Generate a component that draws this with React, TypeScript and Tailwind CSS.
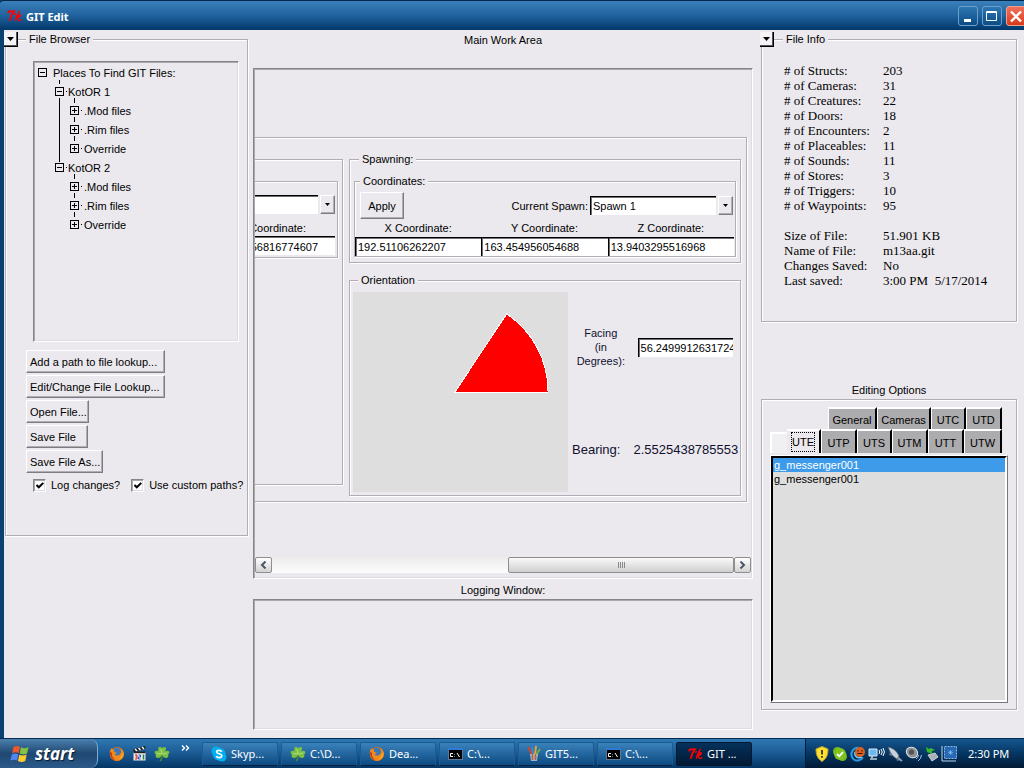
import React, { useState } from "react";
import type { ReactNode } from "react";

const groove = "border border-[#b0aeb4] shadow-[1px_1px_0_#fff,inset_1px_1px_0_#fff]";
const sunken =
  "border border-t-[#858489] border-l-[#858489] border-r-white border-b-white shadow-[inset_1px_1px_0_#a9a8ad,inset_-1px_-1px_0_#dcdde2]";
const entry =
  "bg-white border-t border-l border-t-black border-l-black shadow-[inset_1px_1px_0_#6f6e73] rounded-none outline-none text-[11px] text-black";
const raised =
  "border border-t-white border-l-white border-r-[#7d7c82] border-b-[#7d7c82] shadow-[inset_-1px_-1px_0_#b0aeb4] bg-[#ebe9ed]";

function TkLogo() {
  return (
    <svg width="15" height="12" viewBox="0 0 15 12" fill="none" stroke="#f00" aria-hidden="true">
      <path d="M.8 3.2 2 1.4 7 1.2 4.6 5 2.6 10.8" strokeWidth="1.9" />
      <path d="M12.6.8 10.8 4 8.2 10.8M8.6 7.6c2-2.8 4.400-3.200 4.800-2.400S11.500 7.400 9.600 7.600c1.400.4 1.200 2.800 2.400 3 .8.1 1.500-.7 2-1.500M6.800 4.300 9 3.500" strokeWidth="1.4" />
    </svg>
  );
}

function CollapseButton({ label }: { label: string }) {
  return (
    <button
      type="button"
      aria-label={label}
      className="absolute -left-px top-0 z-10 flex h-[15px] w-[14px] items-center justify-center border-r border-b border-black bg-[#f4f3f6] shadow-[inset_-1px_-1px_0_#55545a]"
    >
      <svg width="7" height="4" viewBox="0 0 7 4" aria-hidden="true">
        <path d="M0 0h7L3.500 4z" fill="#000" />
      </svg>
    </button>
  );
}

function Group({ title, className, children }: { title: string; className: string; children: ReactNode }) {
  return (
    <fieldset className={`min-w-0 ${groove} ${className}`}>
      <legend className="ml-[5px] bg-[#ebe9ed] px-[3px] leading-4">{title}</legend>
      {children}
    </fieldset>
  );
}

function ExpandBox({ open }: { open: boolean }) {
  return (
    <svg width="9" height="9" viewBox="0 0 9 9" fill="none" stroke="#000" shapeRendering="crispEdges" aria-hidden="true">
      <path d="M.5.5h8v8h-8zM2 4.500h5" />
      {!open && <path d="M4.500 2v5" />}
    </svg>
  );
}

function TreeLeaf({ name }: { name: string }) {
  return (
    <li className="relative flex h-[19px] items-center">
      <span className="absolute -top-[3px] left-1 h-[5px] w-px bg-black" />
      <ExpandBox open={false} />
      <span className="ml-[2px] w-px h-px bg-black" />
      <span className="ml-[2px]">{name}</span>
    </li>
  );
}

function TreeBranch({ name, last }: { name: string; last?: boolean }) {
  return (
    <li className="relative">
      {!last && <span className="absolute top-4 left-1 h-[64px] w-px bg-black" />}
      <div className="relative flex h-[19px] items-center">
        {!last && <span className="absolute -top-[2px] left-1 h-[4px] w-px bg-black" />}
        <ExpandBox open />
        <span className="ml-[2px] w-px h-px bg-black" />
        <span className="ml-px">{name}</span>
      </div>
      <ul className="pl-[15px]">
        <TreeLeaf name=".Mod files" />
        <TreeLeaf name=".Rim files" />
        <TreeLeaf name="Override" />
      </ul>
    </li>
  );
}

function Check({ label }: { label: string }) {
  const [on, setOn] = useState(true);
  return (
    <label className="relative flex items-center gap-[5px] whitespace-nowrap">
      <input
        type="checkbox"
        checked={on}
        onChange={() => setOn(!on)}
        className={`size-[13px] appearance-none bg-white ${sunken}`}
      />
      {on && (
        <svg className="pointer-events-none absolute left-[3px] top-[5px]" width="8" height="7" viewBox="0 0 8 7" aria-hidden="true">
          <path d="M.5 3 2.800 5.300 7.300.9" fill="none" stroke="#000" strokeWidth="2" />
        </svg>
      )}
      {label}
    </label>
  );
}

function FileBrowser() {
  const actions: [string, string][] = [
    ["Add a path to file lookup...", "w-[139px]"],
    ["Edit/Change File Lookup...", "w-[139px]"],
    ["Open File...", "w-[63px]"],
    ["Save File", "w-[62px]"],
    ["Save File As...", "w-[77px]"],
  ];
  return (
    <aside className="relative w-[243px] shrink-0">
      <CollapseButton label="Collapse file browser" />
      <fieldset className={`-mt-px h-[505px] min-w-0 ${groove}`}>
        <legend className="ml-[20px] bg-[#ebe9ed] px-[3px] leading-4">File Browser</legend>
        <div className={`mt-[14px] ml-[27px] mr-[8px] h-[281px] ${sunken} pt-px pl-[4px]`}>
          <div className="flex h-[19px] items-center gap-[6px]">
            <ExpandBox open />
            Places To Find GIT Files:
          </div>
          <ul className="pl-[17px]">
            <TreeBranch name="KotOR 1" />
            <TreeBranch name="KotOR 2" last />
          </ul>
        </div>
        <div className="mt-[8px] ml-[20px] flex flex-col items-start gap-[2px]">
          {actions.map(([name, width]) => (
            <button key={name} type="button" className={`h-[23px] ${width} ${raised} pt-px pl-[3px] text-left whitespace-nowrap`}>
              {name}
            </button>
          ))}
        </div>
        <div className="mt-[4px] ml-[27px] flex gap-[11px]">
          <Check label="Log changes?" />
          <Check label="Use custom paths?" />
        </div>
      </fieldset>
    </aside>
  );
}

function ArrowBox() {
  return (
    <span className={`flex h-[19px] w-[15px] shrink-0 items-center justify-center ${raised}`}>
      <svg width="5" height="3" viewBox="0 0 5 3" aria-hidden="true">
        <path d="M0 0h5L2.500 3z" fill="#000" />
      </svg>
    </span>
  );
}

function CoordinateField({ axis, value }: { axis: string; value: string }) {
  return (
    <label className="flex min-w-0 flex-1 flex-col">
      <span className="h-[18px] pt-px text-center leading-4">{axis} Coordinate:</span>
      <input defaultValue={value} className={`h-[19px] w-full min-w-0 pl-[2px] ${entry}`} />
    </label>
  );
}

function Spawning() {
  return (
    <Group title="Spawning:" className="px-[4px] pb-[5px]">
      <Group title="Coordinates:" className="mt-[6px]">
        <div className="flex h-[30px] items-center pt-[3px] pr-[2px] pl-[5px]">
          <button type="button" className={`h-[27px] w-[44px] ${raised}`}>
            Apply
          </button>
          <label htmlFor="spawn" className="ml-auto pr-[2px]">
            Current Spawn:
          </label>
          <div className="relative flex w-[143px]">
            <select id="spawn" className={`h-[19px] w-full appearance-none pl-[2px] ${entry}`}>
              <option>Spawn 1</option>
            </select>
            <span className="pointer-events-none absolute right-0 top-0 bg-[#ebe9ed] pl-[2px]">
              <ArrowBox />
            </span>
          </div>
        </div>
        <div className="flex pr-px">
          <CoordinateField axis="X" value="192.51106262207" />
          <CoordinateField axis="Y" value="163.454956054688" />
          <CoordinateField axis="Z" value="13.9403295516968" />
        </div>
      </Group>
    </Group>
  );
}

function Orientation() {
  return (
    <Group title="Orientation" className="mt-[9px] pr-[7px] pb-[3px] pl-[3px]">
      <div className="mt-[4px] flex">
        <svg className="shrink-0 bg-[#dedede]" width="215" height="200" viewBox="0 0 215 200" role="img" aria-label="Facing">
          <path d="M102 100H195A93 93 0 0 0 153.700 22z" fill="#f00" stroke="#fff" strokeWidth="1" shapeRendering="crispEdges" />
        </svg>
        <div className="flex min-w-0 flex-1 flex-col">
          <div className="mt-[34px] flex items-center">
            <label htmlFor="facing" className="w-[66px] text-center leading-[14px] text-[#101030]">
              Facing
              <br />
              (in
              <br />
              Degrees):
            </label>
            <input id="facing" defaultValue="56.2499912631724" className={`ml-[4px] h-[19px] w-[96px] min-w-0 pl-[2px] ${entry}`} />
          </div>
          <div className="mt-[74px] flex gap-[13px] pl-[4px] text-[13px] leading-4 whitespace-nowrap text-[#101030]">
            <span>Bearing:</span>
            <output>2.5525438785553</output>
          </div>
        </div>
      </div>
    </Group>
  );
}

function PreviousGroup() {
  return (
    <div className="mt-[21px] mr-[6px] h-[326px] min-w-0 flex-1 overflow-hidden border-y border-r border-[#b0aeb4] pr-[4px] shadow-[1px_1px_0_#fff,inset_0_1px_0_#fff]">
      <div className="mt-[21px] h-[77px] overflow-hidden border-y border-r border-[#b0aeb4] pt-[13px] pr-[2px] shadow-[1px_1px_0_#fff,inset_0_1px_0_#fff]">
        <div className="flex gap-[2px]">
          <input
            aria-label="Current selection"
            className="h-[19px] min-w-0 flex-1 rounded-none border-t border-black bg-white shadow-[inset_0_1px_0_#6f6e73]"
          />
          <ArrowBox />
        </div>
        <div className="flex h-[22px] items-center justify-end overflow-hidden pt-[5px] pr-[29px] whitespace-nowrap">Coordinate:</div>
        <div className="flex h-[19px] items-center justify-end overflow-hidden border-t border-black bg-white pt-px pr-[17px] shadow-[inset_0_1px_0_#6f6e73]">
          56816774607
        </div>
      </div>
    </div>
  );
}

function ScrollButton({ left }: { left?: boolean }) {
  return (
    <button
      type="button"
      aria-label={left ? "Scroll left" : "Scroll right"}
      className="flex w-[17px] shrink-0 items-center justify-center rounded-[2px] border border-[#8e8e8e] bg-linear-to-b from-white to-[#d2d2d2]"
    >
      <svg width="7" height="8" viewBox="0 0 7 8" fill="none" stroke="#4a5568" strokeWidth="2" aria-hidden="true">
        <path d={left ? "M5.500.5 2 4l3.500 3.500" : "M1.500.5 5 4 1.500 7.500"} />
      </svg>
    </button>
  );
}

function WorkArea() {
  return (
    <main className="flex min-w-0 flex-1 flex-col">
      <h2 className="text-center leading-4">Main Work Area</h2>
      <div className={`mt-[20px] flex h-[511px] flex-col overflow-hidden p-px ${sunken}`}>
        <div className="mt-[67px] mr-[4px] flex h-[365px] border-y border-r border-[#b0aeb4] pr-[5px] shadow-[1px_1px_0_#fff,inset_0_1px_0_#fff]">
          <PreviousGroup />
          <div className="w-[392px] shrink-0 pt-[13px]">
            <Spawning />
            <Orientation />
          </div>
        </div>
        <div className="mt-auto mb-[4px] flex h-[16px] bg-linear-to-b from-[#ececec] to-[#fdfdfd]">
          <ScrollButton left />
          <div className="flex-1" />
          <div className="flex w-[226px] items-center justify-center gap-px rounded-[2px] border border-[#8e8e8e] bg-linear-to-b from-[#fafafa] to-[#cfcfcf]">
            {[0, 1, 2, 3].map((n) => (
              <span key={n} className="h-[6px] w-px bg-[#8a8a8a]" />
            ))}
          </div>
          <ScrollButton />
        </div>
      </div>
      <h2 className="mt-[3px] text-center leading-4">Logging Window:</h2>
      <div className={`mt-px min-h-[131px] flex-1 ${sunken}`} />
    </main>
  );
}

const stats: [string, string][] = [
  ["# of Structs:", "203"],
  ["# of Cameras:", "31"],
  ["# of Creatures:", "22"],
  ["# of Doors:", "18"],
  ["# of Encounters:", "2"],
  ["# of Placeables:", "11"],
  ["# of Sounds:", "11"],
  ["# of Stores:", "3"],
  ["# of Triggers:", "10"],
  ["# of Waypoints:", "95"],
  ["", ""],
  ["Size of File:", "51.901 KB"],
  ["Name of File:", "m13aa.git"],
  ["Changes Saved:", "No"],
  ["Last saved:", "3:00 PM  5/17/2014"],
];

function Tab({ name, width }: { name: string; width: string }) {
  return (
    <button
      type="button"
      className={`${width} border-t-2 border-l border-r-2 border-t-white border-l-white border-r-black bg-[#acabad] pt-px`}
    >
      {name}
    </button>
  );
}

function RightColumn() {
  const [selected, setSelected] = useState(0);
  return (
    <aside className="relative w-[256px] shrink-0">
      <CollapseButton label="Collapse file info" />
      <fieldset className={`-mt-px h-[291px] min-w-0 ${groove}`}>
        <legend className="ml-[21px] bg-[#ebe9ed] px-[3px] leading-4">File Info</legend>
        <table className="mt-[16px] ml-[22px] font-['Liberation_Serif',serif] text-[13px] leading-[15px]">
          <tbody>
            {stats.map(([name, value], i) => (
              <tr key={i} className="h-[15px]">
                <td className="w-[99px] p-0">{name}</td>
                <td className="p-0 whitespace-pre">{value}</td>
              </tr>
            ))}
          </tbody>
        </table>
      </fieldset>
      <h2 className="mt-[60px] text-center leading-4">Editing Options</h2>
      <section className={`mt-px h-[311px] px-[8px] pt-[7px] ${groove}`}>
        <div className="flex h-[22px] justify-end pr-[6px]">
          <Tab name="General" width="w-[49px]" />
          <Tab name="Cameras" width="w-[54px]" />
          <Tab name="UTC" width="w-[35px]" />
          <Tab name="UTD" width="w-[36px]" />
        </div>
        <div className="flex h-[24px] justify-end pr-[6px]">
          <span className="mt-[3px] flex-1 border-t-2 border-l-2 border-white bg-[#f0eff2]" />
          <button type="button" className="w-[34px] border-t-2 border-r-2 border-t-white border-r-black bg-[#ebe9ed] px-[4px]">
            <span className="block border border-dotted border-black leading-[18px]">UTE</span>
          </button>
          <Tab name="UTP" width="w-[36px]" />
          <Tab name="UTS" width="w-[35px]" />
          <Tab name="UTM" width="w-[36px]" />
          <Tab name="UTT" width="w-[36px]" />
          <Tab name="UTW" width="w-[38px]" />
        </div>
        <div className="mt-[2px] h-[248px] border border-t-white border-l-white border-r-[#77767c] border-b-[#77767c]">
          <ul
            role="listbox"
            aria-label="Encounters"
            className="h-full border-2 border-t-black border-l-black border-r-white border-b-white bg-[#dedede]"
          >
            {["g_messenger001", "g_messenger001"].map((name, i) => (
              <li
                key={i}
                role="option"
                aria-selected={selected === i}
                onClick={() => setSelected(i)}
                className={`h-[14px] pl-px leading-[14px] ${selected === i ? "bg-[#3d9bea] text-white" : ""}`}
              >
                {name}
              </li>
            ))}
          </ul>
        </div>
      </section>
    </aside>
  );
}

function TitleBar() {
  const box = "flex h-[20px] w-[20px] items-center justify-center rounded-[3px] border border-[#6aa0cc] bg-linear-to-b from-[#2d77b2] to-[#0a4c85]";
  return (
    <header className="flex h-[30px] items-center overflow-hidden rounded-tl-[4px] border-t border-[#04284d] bg-linear-to-b from-[#3b80ba] from-0% via-[#2164a0] via-48% to-[#02386b] to-100% pl-[7px]">
      <TkLogo />
      <h1 className="ml-[4px] pt-[2px] font-['Noto_Sans',sans-serif] text-[11px] font-bold text-white">GIT Edit</h1>
      <div className="-mr-[2px] ml-auto flex gap-[3px]">
        <button type="button" aria-label="Minimize" className={box}>
          <svg width="18" height="18" viewBox="0 0 18 18" aria-hidden="true">
            <path d="M5 12h7v3H5z" fill="#fff" />
          </svg>
        </button>
        <button type="button" aria-label="Maximize" className={`ml-px ${box}`}>
          <svg width="18" height="18" viewBox="0 0 18 18" fill="none" stroke="#fff" aria-hidden="true">
            <path d="M3.500 4.500h10v9h-10zM3 5.500h11" />
          </svg>
        </button>
        <button
          type="button"
          aria-label="Close"
          className="ml-px flex h-[20px] w-[20px] items-center justify-center rounded-[3px] border border-[#f0a090] bg-linear-to-b from-[#f0705a] to-[#d83a18]"
        >
          <svg width="18" height="18" viewBox="0 0 18 18" fill="none" stroke="#fff" strokeWidth="2.400" aria-hidden="true">
            <path d="M4 4.500l10 10M14 4.500l-10 10" />
          </svg>
        </button>
      </div>
    </header>
  );
}

function Firefox() {
  return (
    <svg width="16" height="16" viewBox="0 0 16 16" aria-hidden="true">
      <circle cx="8" cy="8" r="7" fill="#e8700f" />
      <circle cx="7.500" cy="6.500" r="4.800" fill="#3b78b8" />
      <path d="M1 5c.5-1.500 1-2 1.500-3 .6 1 1.500 1.500 3 1.500-.5 1-1 1.500-.2 2.300 1 .8 2 .6 2.500.9C7 8 6 8 5.500 8.200c1 2 4.500 1.800 6-.7 1-1.700.6-4-.5-5.500 3 1.500 4.500 5 3.400 8.200C13 14 9 15.500 6 14.600 2 13.500.2 9 1 5z" fill="#f08a1c" />
      <path d="M1 6c-.3 4 2 8 6 8.800-3-2-4.500-4.500-4-8z" fill="#c93a12" />
      <path d="M14.200 6c.5 3-1.500 6.500-4.700 7.500 2.500-2 4-4 4.700-7.500z" fill="#fbcf3c" />
    </svg>
  );
}

function Clover() {
  return (
    <svg width="16" height="16" viewBox="0 0 16 16" aria-hidden="true">
      <path d="M8 8c.3 3 .2 5-2 7" stroke="#4d8a2a" strokeWidth="1.600" fill="none" />
      <g fill="#7cc242">
        <path d="M8 8C3.500 7.500 4 4.500 4.500 1.500 6 0 7.500 1 8 2.500 9.500.5 11 .5 12 2 12 5 11 7 8 8z" />
        <path d="M8 8C5 5 2.500 4 .8 5.500.5 7 1 8 2 8.500 1 10 2 11.500 3.500 12 6 12 7.500 10.500 8 8z" />
        <path d="M8 8c3-3 5.500-4 7.200-2.500.3 1.500-.2 2.500-1.200 3 1 1.500 0 3-1.500 3.500C10 12 8.500 10.500 8 8z" />
      </g>
      <path d="M8 8 7 3M8 8 3 7.500M8 8l5-1" stroke="#c3e79a" strokeWidth=".7" />
    </svg>
  );
}

function Clapper() {
  return (
    <svg width="15" height="15" viewBox="0 0 15 15" aria-hidden="true">
      <path d="M1 3.500 13 0l.8 2.500L2 6z" fill="#222" />
      <path d="M3 2.900 5 4.900M6.500 2l2 2M10 1l2 2" stroke="#fff" strokeWidth="1.400" />
      <path d="M1.500 6h12v8.500h-12z" fill="#e8e8e8" />
      <path d="M1.500 5.500h12v1.700h-12z" fill="#222" />
      <path d="M3 9h2v2H3.500M5 11v2H3" stroke="#d22" fill="none" />
      <path d="M6.500 9h2v2h-2v2h2" stroke="#25c" fill="none" />
      <path d="M11.500 8.500v5" stroke="#283" strokeWidth="1.500" />
    </svg>
  );
}

function Skype() {
  return (
    <svg width="16" height="16" viewBox="0 0 16 16" aria-hidden="true">
      <circle cx="5" cy="5" r="4.500" fill="#00aff0" />
      <circle cx="11" cy="11" r="4.500" fill="#00aff0" />
      <circle cx="8" cy="8" r="6.500" fill="#00aff0" />
      <path d="M10.700 5.700C10 4 5.700 3.700 5.600 6c0 2.300 5.200 1.300 5.200 3.800C10.700 12.300 6 12.200 5.300 10" fill="none" stroke="#fff" strokeWidth="1.700" />
    </svg>
  );
}

function Console() {
  return (
    <svg width="15" height="12" viewBox="0 0 15 12" aria-hidden="true">
      <path d="M0 0h15v12H0z" fill="#5d7896" />
      <path d="M0 0h15v2H0z" fill="#2f7ad4" />
      <path d="M1 2h13v9H1z" fill="#000" />
      <path d="M5 5.500H2.500v3H5M6.500 6v.5M6.500 8v.5M9 5l2.500 4" stroke="#fff" fill="none" />
    </svg>
  );
}

function Brushes() {
  return (
    <svg width="14" height="16" viewBox="0 0 14 16" fill="none" aria-hidden="true">
      <path d="M1.500 1 5 9" stroke="#d9442a" strokeWidth="2" />
      <path d="M5 1.500 6.500 9" stroke="#3d8bd0" strokeWidth="2" />
      <path d="M9 0 8 9" stroke="#e0a43a" strokeWidth="2" />
      <path d="M13 3 9 9" stroke="#6fb040" strokeWidth="2" />
      <path d="M3 8h8l-1 7H4z" fill="#d7dbe0" opacity=".7" />
      <path d="M5.500 8v6M8.500 8v6" stroke="#b8603a" strokeWidth="1.500" />
    </svg>
  );
}

function WindowsFlag() {
  return (
    <svg width="20" height="18" viewBox="0 0 20 18" aria-hidden="true">
      <path d="M3.500 2C6 .5 8 1 10 2L8.600 8.300C6.500 7 4.500 7 2 8.300z" fill="#f0562b" />
      <path d="M11 2.300c2.500 1.200 4.500 1.200 7.500-.3L17 8.400c-2.500 1.300-5 1.300-7.400.2z" fill="#82c341" />
      <path d="M1.800 9.400c2.500-1.300 4.500-1.100 6.600 0L7 15.600c-2-1.200-4-1.200-6.700 0z" fill="#4f86f0" />
      <path d="M9.300 9.800c2.400 1.100 4.900 1.100 7.400-.2l-1.400 6.400c-2.500 1.300-5 1.200-7.400 0z" fill="#fccb2f" />
    </svg>
  );
}

function TrayIcons() {
  return (
    <>
      <svg width="16" height="16" viewBox="0 0 16 16" aria-hidden="true">
        <path d="M8 .5 14 3c0 6-1.500 9.500-6 12.500C3.500 12.500 2 9 2 3z" fill="#ffe02a" stroke="#b8a040" />
        <path d="M8 4v4.500M8 10v1.800" stroke="#333" strokeWidth="1.800" />
      </svg>
      <svg width="16" height="16" viewBox="0 0 16 16" aria-hidden="true">
        <circle cx="5.500" cy="5.500" r="4.500" fill="#74b81b" />
        <circle cx="10.500" cy="10.500" r="4.500" fill="#74b81b" />
        <circle cx="8" cy="8" r="6" fill="#7fc41f" />
        <path d="M5 8l2.300 2.300L11 6" stroke="#fff" strokeWidth="1.800" fill="none" />
      </svg>
      <svg width="16" height="16" viewBox="0 0 16 16" aria-hidden="true">
        <path d="M8 1.500C3 2 1 6 1.500 9.500 2 13 5 15 8.500 14.500 11 14 12 13 13 11.500" fill="none" stroke="#2b9be6" strokeWidth="2" />
        <path d="M5 6c-1 5 3 6.500 7 5" fill="none" stroke="#7cc8f5" strokeWidth="1.600" />
        <circle cx="10" cy="6" r="5" fill="#d9601f" />
        <path d="M8 4v1.500M12 4v1.500M7.500 7.500h5" stroke="#3a1200" />
      </svg>
      <svg width="17" height="16" viewBox="0 0 17 16" fill="none" aria-hidden="true">
        <path d="M1 3h8v7H1z" fill="#6cb8f2" stroke="#dce9f5" />
        <path d="M4 10v2M2 13h7" stroke="#c6d3e0" strokeWidth="1.600" />
        <path d="M11 4q1.500 2 0 4M13 3q2.500 3 0 6M15 2q3 4 0 8" stroke="#fff" />
      </svg>
      <svg width="16" height="16" viewBox="0 0 16 16" aria-hidden="true">
        <path d="M5 10 2 9l1-4 4 1zM9 12l1 3 4-1-3-5z" fill="#5d7388" />
        <path d="M1 1c5 1 9 4 11 9l-2 3C6 11 3 7 1 1z" fill="#c8d2dc" stroke="#46535f" strokeWidth=".7" />
        <path d="M11 12l4 3" stroke="#8fa1b3" strokeWidth="1.800" fill="none" />
      </svg>
      <svg width="17" height="16" viewBox="0 0 17 16" aria-hidden="true">
        <ellipse cx="7" cy="6.500" rx="6" ry="5" fill="#8d9094" stroke="#e2e2e2" transform="rotate(35 7 6.500)" />
        <circle cx="6.500" cy="6" r="2.600" fill="#4f5356" />
        <path d="M11 13q2-1 2.500-4M13 15q3-2 3.500-6" stroke="#a9c7ff" fill="none" />
      </svg>
      <svg width="15" height="16" viewBox="0 0 15 16" aria-hidden="true">
        <path d="M4 9l7-2 3 4-6 4z" fill="#a9b0b7" stroke="#e1e5e8" strokeWidth=".8" />
        <path d="M2 1l1 5 5 2V5l3-1-4-2-2 1z" fill="#37b92d" />
      </svg>
      <svg width="17" height="17" viewBox="0 0 17 17" fill="none" aria-hidden="true">
        <path d="M3.500 1.500h12v12h-12z" fill="#2768b5" stroke="#8db8ea" strokeDasharray="2 1" />
        <path d="M1 1v15h14" stroke="#bcd6f3" />
        <path d="M9.500 5v5M7 7.500h5M7.500 5.500l4 4M11.500 5.500l-4 4" stroke="#8fc2f5" strokeWidth=".6" />
      </svg>
    </>
  );
}

function Taskbar() {
  const tasks: [string, ReactNode][] = [
    ["Skyp...", <Skype />],
    ["C:\\D...", <Clover />],
    ["Dea...", <Firefox />],
    ["C:\\...", <Console />],
    ["GIT5...", <Brushes />],
    ["C:\\...", <Console />],
    ["GIT ...", <TkLogo />],
  ];
  return (
    <footer className="flex h-[30px] items-stretch border-t border-[#032a50] bg-linear-to-b from-[#2f78b3] from-0% via-[#1c5d96] via-45% to-[#043766] to-100% font-['Noto_Sans',sans-serif] text-[11px] text-white">
      <button
        type="button"
        className="flex w-[98px] items-center gap-[5px] rounded-r-[8px] border-r border-[#7da9cf] bg-linear-to-b from-[#4c80ae] via-[#1f4872] to-[#2b5a8a] pl-[10px]"
      >
        <WindowsFlag />
        <span className="font-['Open_Sans',sans-serif] text-[17px] font-bold italic [text-shadow:1px_1px_1px_#0a1c30]">start</span>
      </button>
      <nav aria-label="Quick launch" className="flex w-[104px] items-center gap-[7px] pl-[11px]">
        <Firefox />
        <Clapper />
        <Clover />
        <svg className="mb-[12px] ml-[4px]" width="9" height="6" viewBox="0 0 9 6" fill="none" stroke="#fff" strokeWidth="1.400" aria-hidden="true">
          <path d="M1 .5 3.500 3 1 5.500M5 .5 7.500 3 5 5.500" />
        </svg>
      </nav>
      <div className="flex min-w-0 flex-1 items-center gap-[3px]">
        {tasks.map(([name, icon], i) => (
          <button
            key={i}
            type="button"
            className={`flex h-[24px] w-[76px] items-center gap-[4px] rounded-[2px] border whitespace-nowrap ${
              i === 6
                ? "border-[#021830] bg-linear-to-b from-[#05315b] to-[#021a35] pl-[11px]"
                : "border-[#1d5c93] border-b-[#02203f] bg-linear-to-b from-[#3a82bb] to-[#0b4a82] pl-[8px]"
            }`}
          >
            {icon}
            {name}
          </button>
        ))}
      </div>
      <div className="flex w-[219px] shrink-0 items-center gap-[2px] border-l border-[#031c38] bg-linear-to-b from-[#15578f] via-[#063662] to-[#011a36] pl-[8px]">
        <TrayIcons />
        <time className="ml-[8px]">2:30 PM</time>
      </div>
    </footer>
  );
}

export default function App() {
  return (
    <div className="flex min-h-screen flex-col bg-[#0a3a69] font-['Liberation_Sans',Arial,sans-serif] text-[11px] leading-4 text-black">
      <TitleBar />
      <div className="flex flex-1 border-l-4 border-[#0b4170] bg-[#ebe9ed] pt-[2px] pr-[7px] pb-[8px]">
        <div className="flex min-w-0 flex-1 pl-px">
          <FileBrowser />
          <div className="flex min-w-0 flex-1 pr-[8px] pl-[5px]">
            <WorkArea />
          </div>
          <RightColumn />
        </div>
      </div>
      <Taskbar />
    </div>
  );
}
